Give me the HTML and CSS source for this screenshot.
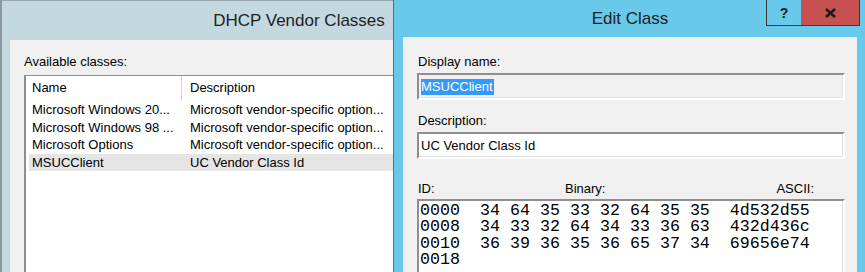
FILE: index.html
```html
<!DOCTYPE html>
<html lang="en">
  <head>
    <meta charset="UTF-8" />
    <link rel="stylesheet" href="styles.css">
    <title>Edit Class</title>
  </head>
  <body>
    <div class="desktop">
      <div class="window vendor">
        <div class="titlebar"><span class="title">DHCP Vendor Classes</span></div>
        <div class="client">
          <div class="label">Available classes:</div>
          <div class="listview">
            <div class="row header">
              <div class="cell name">Name</div>
              <div class="cell desc">Description</div>
            </div>
            <div class="row">
              <div class="cell name">Microsoft Windows 20...</div>
              <div class="cell desc">Microsoft vendor-specific option...</div>
            </div>
            <div class="row">
              <div class="cell name">Microsoft Windows 98 ...</div>
              <div class="cell desc">Microsoft vendor-specific option...</div>
            </div>
            <div class="row">
              <div class="cell name">Microsoft Options</div>
              <div class="cell desc">Microsoft vendor-specific option...</div>
            </div>
            <div class="row selected">
              <div class="cell name">MSUCClient</div>
              <div class="cell desc">UC Vendor Class Id</div>
            </div>
          </div>
        </div>
      </div>

      <div class="window edit">
        <div class="titlebar"><span class="title">Edit Class</span></div>
        <div class="controls">
          <div class="btn help">?</div>
          <div class="btn close">
            <svg width="13" height="10" viewBox="0 0 13 10">
              <path d="M2 1 L11 9 M11 1 L2 9" stroke="#1a1a1a" stroke-width="2.6" fill="none" />
            </svg>
          </div>
        </div>
        <div class="client">
          <div class="label">Display name:</div>
          <div class="field readonly"><span class="sel">MSUCClient</span></div>
          <div class="label second">Description:</div>
          <div class="field">UC Vendor Class Id</div>
          <div class="idrow">
            <span>ID:</span>
            <span>Binary:</span>
            <span class="ascii">ASCII:</span>
          </div>
          <div class="hexbox">0000  34 64 35 33 32 64 35 35  4d532d55
0008  34 33 32 64 34 33 36 63  432d436c
0010  36 39 36 35 36 65 37 34  69656e74
0018</div>
        </div>
      </div>
    </div>
  </body>
</html>
```

FILE: styles.css
```css
body {
  margin: 0;
  font-family: "Liberation Sans", Arial, sans-serif;
  font-size: 13px;
  color: #000;
}

.desktop {
  position: relative;
  width: 865px;
  height: 272px;
  overflow: hidden;
  background: #fff;
}

.window {
  position: absolute;
  top: 0;
  height: 320px;
  box-sizing: border-box;
  display: flex;
  flex-direction: column;
}

.titlebar {
  display: flex;
  justify-content: center;
  align-items: flex-start;
  flex-shrink: 0;
}
.title {
  font-size: 17px;
  line-height: 20px;
  color: #1e1e1e;
}

.client {
  flex: 1;
  display: flex;
  flex-direction: column;
  background: #f0f0f0;
}
.label {
  line-height: 16px;
}

/* DHCP Vendor Classes (inactive, behind) */
.vendor {
  left: 0;
  width: 596px;
  background: #c4d8df;
  border-top: 1px solid #97a7ae;
  border-left: 2px solid #8b989e;
  padding: 0 8px;
}
.vendor .titlebar {
  height: 39px;
  padding-top: 10px;
  box-sizing: border-box;
}
.vendor .client {
  padding: 14px 0 0 14px;
}

.listview {
  flex: 1;
  margin-top: 5px;
  background: #fff;
  border: 1px solid #8e8f8f;
  border-left-width: 2px;
}
.row {
  display: grid;
  grid-template-columns: 153px 1fr;
  margin-left: 3px;
  height: 17.5px;
  line-height: 17.5px;
}
.row.header {
  height: 25px;
  line-height: 24px;
  margin-bottom: 0;
}
.cell {
  white-space: nowrap;
  overflow: hidden;
}
.cell.name {
  padding-left: 3px;
}
.cell.desc {
  padding-left: 8px;
}
.header .cell.name {
  box-sizing: border-box;
  border-right: 1px solid #d9d9d9;
}
.row.selected {
  background: #e5e5e5;
}

/* Edit Class (active) */
.edit {
  left: 393px;
  width: 473px;
  background: #69c9ea;
  border-left: 1px solid #4d7586;
  padding: 0 9px;
}
.edit .titlebar {
  height: 37px;
  padding-top: 9px;
  box-sizing: border-box;
}
.controls {
  position: absolute;
  top: 0;
  right: 6px;
  display: flex;
  border: 1px solid #3a3a3a;
  border-top: none;
}
.btn {
  height: 25px;
  display: flex;
  justify-content: center;
  align-items: center;
  font-weight: bold;
  font-size: 14px;
  color: #1a1a1a;
}
.btn.help {
  width: 34px;
  background: #69c9ea;
}
.btn.close {
  width: 58px;
  background: #c75050;
}

.edit .client {
  padding: 17px 12px 0 14px;
}
.edit .label {
  padding-left: 1px;
}
.edit .label.second {
  margin-top: 13px;
}

.field {
  margin-top: 3px;
  height: 27px;
  box-sizing: border-box;
  display: flex;
  align-items: center;
  padding-left: 2px;
  background: #fff;
  border: 2px solid;
  border-color: #8f8f8f #fff #fff #8f8f8f;
  box-shadow: inset -1px -1px 0 #e0e0e0;
  white-space: nowrap;
}
.field.readonly {
  background: #f0f0f0;
}
.sel {
  background: #3399ff;
  color: #fff;
  line-height: 16px;
  padding-right: 1px;
}

.idrow {
  margin-top: 22px;
  display: grid;
  grid-template-columns: 147px 1fr auto;
  line-height: 16px;
  padding-left: 1px;
}
.idrow .ascii {
  padding-right: 31px;
}

.hexbox {
  flex: 1;
  margin-top: 2px;
  padding: 2px 0 0 1px;
  background: #fff;
  border: 2px solid;
  border-color: #8f8f8f #fff #fff #8f8f8f;
  box-shadow: inset -1px -1px 0 #e0e0e0;
  font-family: "Liberation Mono", "Courier New", monospace;
  font-size: 16.667px;
  line-height: 16.3px;
  white-space: pre;
}
```
